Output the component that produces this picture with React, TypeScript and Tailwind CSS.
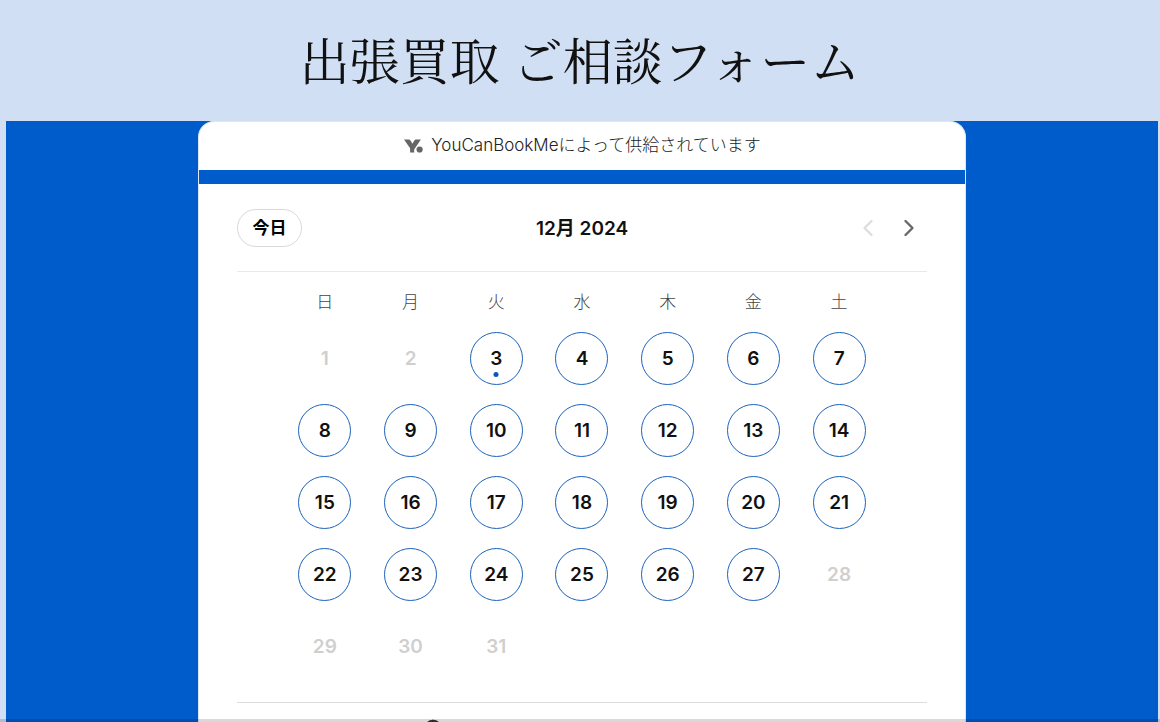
import { ChevronLeft, ChevronRight, Globe } from 'lucide-react';

const WEEKDAYS = ['日', '月', '火', '水', '木', '金', '土'];

const YEAR = 2024;
const MONTH = 12;
const TODAY = 3;
const FIRST_AVAILABLE = 3;
const LAST_AVAILABLE = 27;

function getWeeks(year: number, month: number): (number | null)[][] {
  const offset = new Date(year, month - 1, 1).getDay();
  const total = new Date(year, month, 0).getDate();
  const cells: (number | null)[] = [];

  for (let i = 0; i < offset; i++) cells.push(null);
  for (let day = 1; day <= total; day++) cells.push(day);
  while (cells.length % 7 !== 0) cells.push(null);

  const weeks: (number | null)[][] = [];
  for (let i = 0; i < cells.length; i += 7) weeks.push(cells.slice(i, i + 7));
  return weeks;
}

function BrandMark() {
  return (
    <svg viewBox="0 0 20 16" className="w-5 h-4 text-[#666666]" fill="currentColor" aria-hidden="true">
      <path d="M1 2.5H5.5C6.5 2.5 7.1 2.9 7.5 3.6L9.4 6.8L11.3 3.6C11.7 2.9 12.3 2.5 13.3 2.5H17.9L12.5 10.4A4.6 4.6 0 0 0 11.5 15.5H7.1V11.3Z" />
      <circle cx="16.6" cy="12.5" r="3.1" />
    </svg>
  );
}

function DayButton({ day }: { day: number }) {
  const available = day >= FIRST_AVAILABLE && day <= LAST_AVAILABLE;

  return (
    <button
      type="button"
      disabled={!available}
      className={`relative mx-auto flex size-[53px] items-center justify-center rounded-full text-[19px] leading-7 font-semibold ${
        available ? 'border border-[#1a62bd] text-[#111111]' : 'text-[#cfcfcf]'
      }`}
    >
      {day}
      {day === TODAY && (
        <span className="absolute bottom-[7px] left-1/2 size-[5px] -translate-x-1/2 rounded-full bg-[#0b57b8]" />
      )}
    </button>
  );
}

function Calendar() {
  return (
    <table className="mx-auto w-full max-w-[600px] table-fixed border-collapse">
      <thead>
        <tr className="h-[60px]">
          {WEEKDAYS.map((name) => (
            <th key={name} scope="col" className="p-0 pt-0.5 text-center text-[17px] font-light text-[#444444]">
              {name}
            </th>
          ))}
        </tr>
      </thead>
      <tbody>
        {getWeeks(YEAR, MONTH).map((week, index) => (
          <tr key={index} className="h-[72px]">
            {week.map((day, column) => (
              <td key={column} className="p-0 align-top">
                {day && <DayButton day={day} />}
              </td>
            ))}
          </tr>
        ))}
      </tbody>
    </table>
  );
}

export default function App() {
  return (
    <div className="flex h-screen flex-col overflow-hidden bg-[#d0dff4] font-['Inter','Noto_Sans_CJK_JP',sans-serif]">
      <header className="flex h-[121px] shrink-0 items-center justify-center pb-1.5">
        <h1 className="text-[50px] leading-none font-normal text-[#111111] font-['Noto_Serif_CJK_JP','Noto_Sans_CJK_JP',serif]">
          出張買取 ご相談フォーム
        </h1>
      </header>

      <main className="mr-0.5 ml-1.5 flex grow justify-center bg-[#005bcb]">
        <div className="w-full max-w-3xl">
          <div className="flex h-[49px] items-center justify-center gap-2 rounded-t-2xl border border-b-0 border-[#dde6f2] bg-white pb-0.5">
            <BrandMark />
            <a href="#powered" className="text-[17px] leading-6 font-light text-[#222222]">
              YouCanBookMeによって供給されています
            </a>
          </div>
          <div className="h-3.5 border-x border-[#dde6f2]" />

          <section className="border-x border-[#dde6f2] bg-white px-[38px]">
            <div className="grid h-[88px] grid-cols-3 items-center border-b border-[#e8e8e8]">
              <button
                type="button"
                className="h-[38px] w-[65px] rounded-full border border-[#d9d9d9] pt-0.5 text-[17px] font-bold text-black"
              >
                今日
              </button>
              <h2 className="pt-0.5 text-center text-[19px] leading-7 font-semibold text-[#111111]">
                {MONTH}月 {YEAR}
              </h2>
              <div className="flex justify-end gap-[13px] pr-1">
                <button type="button" aria-label="前の月" disabled className="text-[#dddddd]">
                  <ChevronLeft className="size-7" />
                </button>
                <button type="button" aria-label="次の月" className="text-[#666666]">
                  <ChevronRight className="size-7" />
                </button>
              </div>
            </div>

            <Calendar />

            <div className="mt-[10px] flex justify-center border-t border-[#dddddd] pt-4 pb-10">
              <button type="button" aria-label="タイムゾーン" className="mr-[298px] text-[#333333]">
                <Globe className="size-5" />
              </button>
            </div>
          </section>
        </div>
      </main>

      <div className="fixed inset-x-0 bottom-0 h-[3px] bg-black/15" />
    </div>
  );
}
